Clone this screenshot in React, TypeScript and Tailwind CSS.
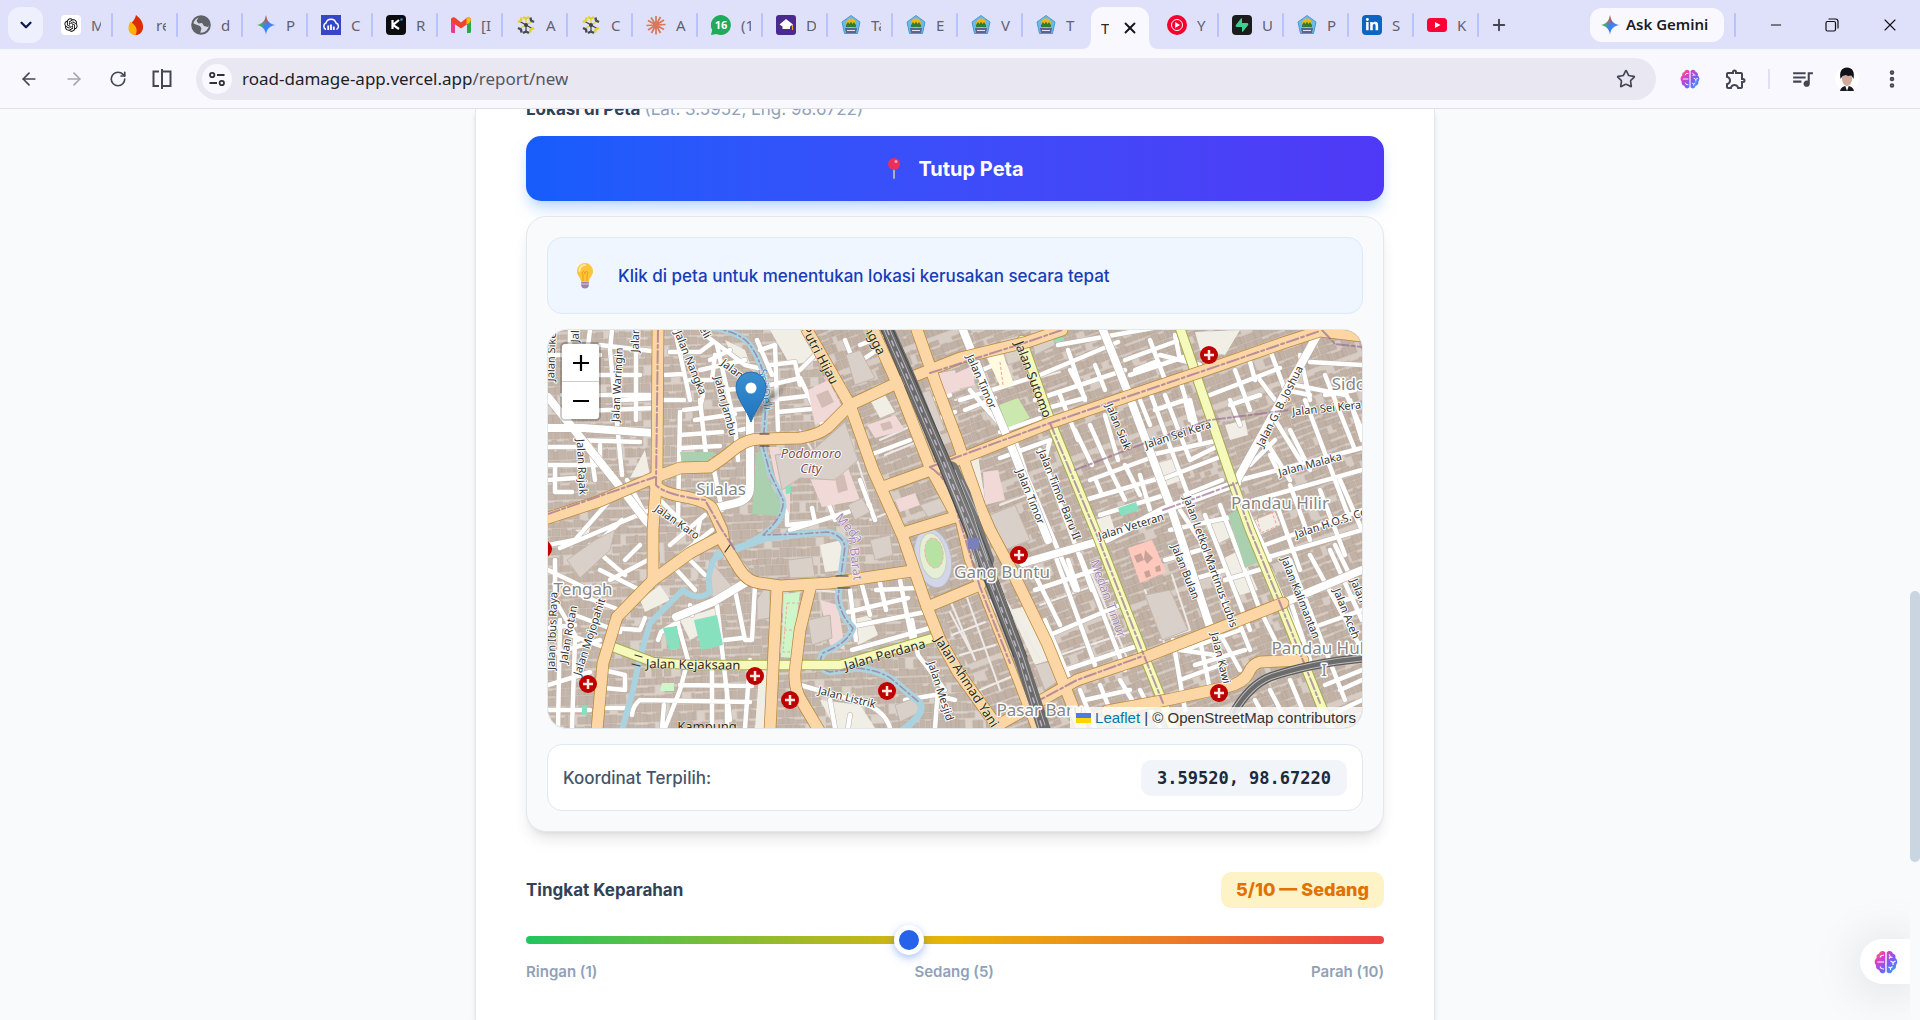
import { useState, type ReactNode } from 'react';
import { ArrowLeft, ArrowRight, ChevronDown, EllipsisVertical, Minus, Plus, RotateCw, Star, X } from 'lucide-react';
import { RiOpenaiFill, RiSupabaseFill } from 'react-icons/ri';
import { FaLinkedinIn } from 'react-icons/fa';
import { MdOutlineExtension, MdQueueMusic } from 'react-icons/md';

const GEMINI_PATH = 'M10 0C10.6 6 14 9.4 20 10C14 10.6 10.6 14 10 20C9.4 14 6 10.6 0 10C6 9.4 9.4 6 10 0Z';

function GeminiIcon() {
  return (
    <svg viewBox="0 0 20 20" className="size-5">
      <defs>
        <linearGradient id="gem" x1="0" y1="0.2" x2="1" y2="0.6">
          <stop offset="0" stopColor="#f9c21a" />
          <stop offset="0.3" stopColor="#3fae6a" />
          <stop offset="0.55" stopColor="#3b7ff5" />
          <stop offset="1" stopColor="#3b8bff" />
        </linearGradient>
        <linearGradient id="gemTop" x1="0" y1="0" x2="0" y2="1">
          <stop offset="0.1" stopColor="#f0453c" />
          <stop offset="0.5" stopColor="#f0453c" stopOpacity="0" />
        </linearGradient>
      </defs>
      <path d={GEMINI_PATH} fill="url(#gem)" />
      <path d={GEMINI_PATH} fill="url(#gemTop)" />
    </svg>
  );
}

function BrainIcon({ className }: { className: string }) {
  return (
    <svg viewBox="0 0 24 24" className={className}>
      <defs>
        <linearGradient id="brain" x1="0" y1="0" x2="1" y2="1">
          <stop offset="0" stopColor="#f9a01b" />
          <stop offset="0.25" stopColor="#e83bc0" />
          <stop offset="0.6" stopColor="#7a5cf5" />
          <stop offset="1" stopColor="#25b4f8" />
        </linearGradient>
      </defs>
      <path
        d="M11.3 2.5C9-.2 5.6 1 5.200 3.600C2.900 4 2 6.200 2.700 8C.3 9.500 0 13 2 15C1.400 17.600 3 19.800 5.300 20.200C6 23.600 9.500 24.200 11.300 22ZM12.700 2.500C15-.2 18.400 1 18.800 3.600C21.100 4 22 6.200 21.300 8C23.700 9.500 24 13 22 15C22.600 17.600 21 19.800 18.700 20.200C18 23.600 14.500 24.200 12.700 22Z"
        fill="url(#brain)"
      />
      <path
        d="M3.500 12H10M6 7.500Q6.500 5 10 5.200M6.200 16.500Q6.500 19 10 19M15 4.500L16.500 7L18.500 7.500M16.500 7L15 8.500M16.500 11L19 12.500L21.500 11M19 12.500V15M14.500 17L16.500 18L18.500 16.500M16.500 18V20"
        fill="none"
        stroke="#fff"
        strokeWidth="1.100"
      />
    </svg>
  );
}

function CrestIcon() {
  return (
    <svg viewBox="0 0 20 20" className="size-5">
      <path d="M10 0.500L19 7L16.500 18.500H3.500L1 7Z" fill="#6ab9e6" stroke="#4a9ccc" />
      <circle cx="10" cy="8.500" r="5" fill="#f6b40e" />
      <path d="M5 10L7 7L8.500 9L10 6.500L11.500 9L13 7L15 10V12H5Z" fill="#2f7d3b" />
      <path d="M4 13H16L15 18H5Z" fill="#5c6294" />
      <path d="M6 15.500H14" stroke="#e8e3f2" />
    </svg>
  );
}

function WheelIcon() {
  return (
    <svg viewBox="0 0 20 20" className="size-5" fill="none">
      <path d="M10 10V3M10 10L16 6.500M10 10L4 13.500" stroke="#e3d120" strokeWidth="1.200" />
      <path d="M10 10V17M10 10L16 13.500M10 10L4 6.500" stroke="#3f4046" strokeWidth="1.200" />
      <path d="M7 2L10 3.500L13 2M14 17.500L14.500 14.500L18 13M2 7L5 5.500L5.500 2.500" stroke="#e3d120" strokeWidth="2.400" />
      <path d="M14.500 2.500L15 5.500L18 7M7 18L10 16.500L13 18M2 13L5 14.500L5.500 17.500" stroke="#4b4c52" strokeWidth="2.400" />
      <circle cx="10" cy="10" r="2" fill="#3f4046" />
    </svg>
  );
}

function FireIcon() {
  return (
    <svg viewBox="0 0 20 20" className="size-5">
      <path d="M10 0C15 4 17.500 8 17 13C16.500 17.500 13 20 10 20C6 20 3 17 3 13C3 9 9 6 10 0Z" fill="#dd2c00" />
      <path d="M4 7C7 8 10 11 10.500 14C11 17 10 19 9.500 20C5 20 2.500 17 2.500 13C2.500 10 3.500 8.500 4 7Z" fill="#ffb300" />
    </svg>
  );
}

function GlobeIcon() {
  return (
    <svg viewBox="0 0 20 20" className="size-5">
      <circle cx="10" cy="10" r="8.800" fill="#d9dbe8" stroke="#5f6368" strokeWidth="2" />
      <path d="M1.500 8L5 9.500L9 11L10.500 13.500L9 18.500C4 18 1 14 1.500 8ZM8 1.500L13 1.500C16 3 18.500 6 18.500 9L17 12L13 11L11 8L7.500 8.500L5.500 6Z" fill="#5f6368" />
    </svg>
  );
}

function CloudIcon() {
  return (
    <svg viewBox="0 0 20 20" className="size-5">
      <path d="M0 0H20V20H0Z" fill="#3448c5" />
      <path d="M5 14.500A3.500 3.500 0 0 1 5 8A5.200 5.200 0 0 1 15 8A3.500 3.500 0 0 1 15.500 14.500" fill="none" stroke="#fff" strokeWidth="1.500" />
      <path d="M7.200 10.500V15M10 9.500V15M12.800 11.500V15" stroke="#fff" strokeWidth="1.800" />
    </svg>
  );
}

function KIcon() {
  return (
    <svg viewBox="0 0 20 20" className="size-5">
      <rect width="20" height="20" rx="4" fill="#0c0c0e" />
      <path d="M6.500 5V14M13 5L7 10L13 14" fill="none" stroke="#fff" strokeWidth="2.200" />
      <circle cx="15.500" cy="4.500" r="1.200" fill="#3b82f6" />
    </svg>
  );
}

function GmailIcon() {
  return (
    <svg viewBox="0 0 20 20" className="size-5">
      <path d="M0 4L4 6.500V18H1.500Q0 18 0 16.500Z" fill="#e93c8b" />
      <path d="M20 4L16 6.500V18H18.500Q20 18 20 16.500Z" fill="#2aa84c" />
      <path d="M0 5C0 2.500 2.500 1.500 4.500 3L10 7.500L15.500 3C17.500 1.500 20 2.500 20 5L18.500 7.500L10 13.500L1.500 7.500Z" fill="#f1412f" />
      <path d="M15.500 3C17.500 1.500 20 2.500 20 5L18.500 8L15.500 9.500Z" fill="#fbbc04" />
    </svg>
  );
}

function BurstIcon() {
  return (
    <svg viewBox="0 0 20 20" className="size-5">
      <path
        d="M10 10V1M10 10L14.500 2M10 10L18 5M10 10L19.500 9.500M10 10L18 14.500M10 10L14.500 18M10 10V19.500M10 10L5.500 18M10 10L2 15M10 10L.5 10.500M10 10L2 5.500M10 10L5 2.500"
        stroke="#d97757"
        strokeWidth="1.700"
      />
    </svg>
  );
}

function WhatsAppIcon() {
  return (
    <svg viewBox="0 0 20 20" className="size-5">
      <path d="M0 20L1.200 15A10 10 0 1 1 5.500 19Z" fill="#1faa5c" />
      <text x="10" y="14" textAnchor="middle" fontSize="11" fontWeight="700" fill="#fff" fontFamily="Noto Sans, sans-serif">
        16
      </text>
    </svg>
  );
}

function GradIcon() {
  return (
    <svg viewBox="0 0 20 20" className="size-5">
      <rect width="20" height="20" rx="3" fill="#4a2a8f" />
      <path d="M10 4L17 9.500L14 11.500V14H6.500V11.500L3.500 9.500Z" fill="#fff" />
      <path d="M16.500 10V15" stroke="#f59e0b" strokeWidth="1.200" />
    </svg>
  );
}

function YtMusicIcon() {
  return (
    <svg viewBox="0 0 20 20" className="size-5">
      <circle cx="10" cy="10" r="10" fill="#f8002f" />
      <circle cx="10" cy="10" r="5.500" fill="none" stroke="#fff" />
      <path d="M8.200 7L13 10L8.200 13Z" fill="#fff" />
    </svg>
  );
}

function YoutubeIcon() {
  return (
    <svg viewBox="0 0 20 20" className="size-5">
      <rect y="3" width="20" height="14" rx="3.500" fill="#ff0033" />
      <path d="M8 7L13.500 10L8 13Z" fill="#fff" />
    </svg>
  );
}

interface Tab {
  icon: ReactNode;
  title: string;
}

const leftTabs: Tab[] = [
  { icon: <span className="flex size-5 items-center justify-center rounded bg-white"><RiOpenaiFill size={16} className="text-black" /></span>, title: 'M' },
  { icon: <FireIcon />, title: 're' },
  { icon: <GlobeIcon />, title: 'd' },
  { icon: <GeminiIcon />, title: 'P' },
  { icon: <CloudIcon />, title: 'C' },
  { icon: <KIcon />, title: 'R' },
  { icon: <GmailIcon />, title: '[I' },
  { icon: <WheelIcon />, title: 'A' },
  { icon: <WheelIcon />, title: 'C' },
  { icon: <BurstIcon />, title: 'A' },
  { icon: <WhatsAppIcon />, title: '(1' },
  { icon: <GradIcon />, title: 'D' },
  { icon: <CrestIcon />, title: 'Ta' },
  { icon: <CrestIcon />, title: 'E' },
  { icon: <CrestIcon />, title: 'V' },
  { icon: <CrestIcon />, title: 'T' },
];

const rightTabs: Tab[] = [
  { icon: <YtMusicIcon />, title: 'Y' },
  { icon: <span className="flex size-5 items-center justify-center rounded-sm bg-[#1c1c1c]"><RiSupabaseFill size={14} className="text-[#3ecf8e]" /></span>, title: 'U' },
  { icon: <CrestIcon />, title: 'P' },
  { icon: <span className="flex size-5 items-center justify-center rounded-sm bg-[#0a66c2]"><FaLinkedinIn size={14} className="text-white" /></span>, title: 'S' },
  { icon: <YoutubeIcon />, title: 'K' },
];

function BrowserTab({ tab, divider }: { tab: Tab; divider: boolean }) {
  return (
    <button className="flex h-full w-[65px] shrink-0 items-center pl-3">
      {tab.icon}
      <span className="ml-2.5 w-2.5 overflow-hidden text-left text-[15px] leading-5 whitespace-nowrap text-[#5f6270]">
        {tab.title}
      </span>
      {divider && <span className="ml-2.5 h-6 w-0.5 rounded bg-[#b8c3fb]" />}
    </button>
  );
}

function BrowserChrome() {
  return (
    <header className="shrink-0 border-b border-[#dfe0ea] bg-[#f9f8fe] font-['Noto_Sans','Open_Sans',sans-serif]">
      <div className="flex h-[49px] items-center bg-[#dfe0fa]">
        <button aria-label="Search tabs" className="ml-2 flex h-9 w-[35px] shrink-0 items-center justify-center rounded-xl bg-[#eff0fe]">
          <ChevronDown size={18} strokeWidth={3} className="text-[#0b1a4f]" />
        </button>
        <div className="ml-1.5 flex h-full min-w-0 items-center">
          {leftTabs.map((tab, i) => (
            <BrowserTab key={i} tab={tab} divider={i < leftTabs.length - 1} />
          ))}
          <div className="flex h-full w-[66px] shrink-0 items-end pt-[7px]">
            <svg viewBox="0 0 10 10" className="-ml-2 size-2.5 shrink-0">
              <path d="M10 0V10H0Q10 10 10 0Z" fill="#f9f8fe" />
            </svg>
            <div className="flex h-full w-[58px] shrink-0 items-center justify-between rounded-t-xl bg-[#f9f8fe] pr-2.5 pl-2.5">
              <span className="w-2 overflow-hidden text-[15px] leading-5 text-[#2a2c36]">T</span>
              <X size={18} strokeWidth={2.500} className="text-[#15161c]" />
            </div>
            <svg viewBox="0 0 10 10" className="size-2.5 shrink-0">
              <path d="M0 0V10H10Q0 10 0 0Z" fill="#f9f8fe" />
            </svg>
          </div>
          {rightTabs.map((tab, i) => (
            <BrowserTab key={i} tab={tab} divider />
          ))}
          <button aria-label="New tab" className="ml-2.5">
            <Plus size={18} strokeWidth={2.500} className="text-[#444654]" />
          </button>
        </div>
        <button className="ml-auto flex h-[34px] w-[134px] shrink-0 items-center gap-1.5 rounded-xl bg-[#f9f8fe] pl-2.5 text-[15px] font-semibold whitespace-nowrap text-[#1b1c24]">
          <GeminiIcon />
          Ask Gemini
        </button>
        <span className="ml-2.5 h-6 w-0.5 shrink-0 rounded bg-[#b8c3fb]" />
        <div className="ml-8 flex shrink-0 items-center gap-[41px] pr-6 text-[#111]">
          <button aria-label="Minimize"><Minus size={16} strokeWidth={1.500} /></button>
          <button aria-label="Restore">
            <svg viewBox="0 0 14 14" className="size-3.5" fill="none" stroke="currentColor" strokeWidth="1.200">
              <rect x="1" y="3.500" width="9.500" height="9.500" rx="1.500" />
              <path d="M3.500 1H10.500Q13 1 13 3.500V10.500" />
            </svg>
          </button>
          <button aria-label="Close"><X size={20} strokeWidth={1.300} className="-mr-1" /></button>
        </div>
      </div>
      <div className="flex h-[59px] items-center">
        <div className="flex shrink-0 items-center gap-[25px] pl-[19px] text-[#444654]">
          <button aria-label="Back"><ArrowLeft size={20} strokeWidth={2} /></button>
          <button aria-label="Forward" className="text-[#a5a6b0]"><ArrowRight size={20} strokeWidth={2} /></button>
          <button aria-label="Reload"><RotateCw size={18} strokeWidth={2.200} /></button>
          <button aria-label="Split view">
            <svg viewBox="0 0 20 20" className="size-5" fill="none" stroke="currentColor" strokeWidth="2">
              <path d="M7 2.500H1.500V17H7M10 0V20M10 2.500H18.500V17H10" />
            </svg>
          </button>
        </div>
        <div className="ml-6 flex h-[42px] min-w-0 flex-1 items-center rounded-full bg-[#e9e8f2] pr-5 pl-1.5">
          <button aria-label="Site information" className="flex size-[30px] shrink-0 items-center justify-center rounded-full bg-[#f9f8fe]">
            <svg viewBox="0 0 16 16" className="size-4" fill="none" stroke="#2f303a" strokeWidth="1.800">
              <circle cx="3.200" cy="4" r="2.200" />
              <path d="M8 4H15.500M.5 12H8" />
              <circle cx="12.800" cy="12" r="2.200" />
            </svg>
          </button>
          <a href="https://road-damage-app.vercel.app/report/new" className="ml-2.5 truncate text-[17px] leading-6 text-[#1d1e26]">
            road-damage-app.vercel.app<span className="text-[#555764]">/report/new</span>
          </a>
          <button aria-label="Bookmark" className="ml-auto text-[#444654]"><Star size={20} strokeWidth={2} /></button>
        </div>
        <div className="flex shrink-0 items-center pr-[17px] pl-6 text-[#444654]">
          <BrainIcon className="size-5" />
          <button aria-label="Extensions" className="ml-6"><MdOutlineExtension size={24} /></button>
          <span className="ml-5 h-5 w-0.5 bg-[#dddffb]" />
          <button aria-label="Media" className="ml-5"><MdQueueMusic size={25} /></button>
          <svg viewBox="0 0 24 24" className="ml-5 size-6">
            <circle cx="12" cy="12" r="12" fill="#fff" />
            <path d="M5 24Q6 19 12 19Q18 19 19 24Z" fill="#191a20" />
            <path d="M10 18H14L12 24Z" fill="#fff" />
            <path d="M7 8H17V13Q16 18.500 12 19Q8 18.500 7 13Z" fill="#d2aa9c" />
            <path d="M5.500 12Q3.500 1 12 .5Q20.500 1 18.500 12L16.500 8.500L13 9L11 8L7.500 9Z" fill="#111217" />
          </svg>
          <button aria-label="Menu" className="ml-[22px]"><EllipsisVertical size={22} strokeWidth={3} /></button>
        </div>
      </div>
    </header>
  );
}

// ---- map ----

const highways = [
  'M658 330L657 470L653 530V580',
  'M548 518L600 501L653 478L680 468L710 467L723 458L737 447Q748 439 760 439L800 438Q818 435 827 428L850 405L897 383L960 358L1027 342L1062 330',
  'M807 330L850 405L873 470L903 537L927 607L940 640L958 672L1000 730',
  'M873 330L897 383L930 467L957 517',
  'M917 330L937 387L957 440L980 507L990 530L1013 573L1047 643L1073 707L1082 730',
  'M883 487L950 463L1050 423L1123 398L1203 371L1283 343L1320 331L1362 336',
  'M597 730L603 663L617 617L653 580L690 553L720 537L740 570Q748 582 760 583L780 586L830 583L912 571',
  'M655 485Q660 492 680 496Q705 500 712 508L722 530L724 542',
  'M777 588L770 730',
  'M811 585L800 630L795 672Q794 688 801 700L820 732',
  'M927 607L980 585',
  'M1000 724L1077 680L1143 658L1283 603',
  'M1107 711L1167 700L1227 687Q1243 683 1248 674Q1252 664 1260 662L1303 660',
  'M903 533L955 517',
];

const thinHighways = ['M957 512L968 560L980 587L1010 663L1035 728'];

const yellowRoads = [
  'M613 647L653 662L690 665L840 665L933 638',
  'M1022 340L1050 420L1097 535L1143 653L1163 703L1174 730',
  'M1180 328L1233 483L1250 530L1280 603L1320 703L1332 730',
];

const majorWhite = [
  'M548 397L617 483L647 522',
  'M548 428L583 428L653 433',
  'M750 407V487Q750 500 736 503L715 508',
  'M1103 330L1127 390L1170 505L1210 627',
  'M1320 330L1237 480',
  'M1023 563L1107 539L1163 510L1237 483',
  'M1283 603L1362 570',
  'M963 330L985 385L1010 443L1048 540',
  'M676 617L713 602L745 583',
];

const minorWhite = [
  // north-west block
  'M570 330V360M590 330L588 345M612 330L610 350L622 475M548 355H600M600 345L660 352M565 375H640M562 395H655M560 412L655 408M575 440L640 442M548 447H590M548 465H600V445M555 465V492H572M590 445L595 480M548 480L575 478M636 330V420M622 400L655 398',
  'M670 352H700L712 343M675 330L690 400M665 375L683 374M684 410L700 408L703 395M680 412L678 520M700 400L706 455M717 345L735 425L738 460M695 420L735 414M680 435L722 432M680 448L720 446M664 400H684M700 370L745 360M705 335L745 365L758 368M760 350L775 345L778 430M770 365L795 362L800 385M772 400L815 395M778 412L822 408M770 385L800 378L825 430M757 340L772 375M690 380H712L715 355M710 360L730 350M726 390L745 388M732 410L752 408M740 430L750 428M712 460L722 510M678 500L735 490M700 520L695 545',
  'M548 545L575 540L610 500M560 548L650 510M580 560L622 520M548 570L600 595M600 570L640 590M610 580L648 560M580 595L625 612M575 615L620 632M570 635L612 650M555 560V600L578 640M590 545L625 575M625 560L640 545M627 480L643 510L650 530M660 500L690 530M670 545L705 515M680 555L712 530M672 565L695 590M690 560L705 575',
  'M548 655L600 640M548 685L590 672M560 620L558 728M575 640L572 728M548 710H590M603 670L625 675V690L605 688M606 708H625M548 628L575 625M612 628L640 630L645 618',
  'M676 617L688 660M690 605L692 615M717 605L730 720M735 590L745 640L752 640L755 585M658 640L661 632L678 622M750 660L745 728M680 685L752 686M688 660L680 690L665 728M640 700L750 702M664 705L662 728M712 665V728M727 690V728M640 700Q633 705 632 715M725 640L742 638',
  // centre
  'M870 455L910 440M787 510V525L815 522L812 508M790 530L870 505M825 495L835 520M860 480L875 520M877 350L855 365L845 340M860 345L885 335M930 400L950 395M935 420L955 412M820 350L800 370',
  'M850 590L856 640M862 585L870 615M880 583L886 610M900 580L912 640M848 612L908 598M850 627L925 612M852 650L930 628M876 590L915 588M800 685L860 702Q885 710 890 728M850 715L848 728M912 620L918 655L945 690M938 690L935 728M905 700L935 695L955 700M830 700L835 728',
  // east of the railway
  'M960 400L1040 375L1118 342M1035 400L1125 370M1058 345L1170 325M1000 432L1040 418M1000 458L1050 440L1045 460M1015 440L1025 470M1020 460L1075 590M1040 450L1092 590M970 390L1005 430M965 410L995 398M965 378L1000 362',
  'M1075 430L1092 465M1090 425L1110 470M1105 415L1118 460M1060 395L1078 440M1140 400L1150 425M1150 392L1175 460M1165 395L1190 460L1220 445M1180 380L1195 430M1155 410L1185 400L1190 420M1090 480L1150 458M1085 500L1160 478M1100 515L1165 495M1095 478L1102 495L1120 490M1110 470L1125 500M1125 465L1140 495M1140 475L1150 510M1175 460L1190 500M1150 455L1220 440M1160 480L1225 455M1185 495L1222 480',
  'M1125 360L1185 338M1130 375L1190 355M1150 340L1165 380M1175 335L1180 360M1095 365L1105 390M1040 410L1085 398L1070 370M1068 350L1085 400M1190 400L1200 440M1160 355L1200 365M1135 370L1155 362',
  'M1210 395L1280 368M1230 400L1240 425M1270 350L1285 390L1310 395M1250 362L1255 380M1310 362L1362 365M1295 385L1345 395M1260 380L1275 400M1235 370L1250 410M1230 405L1260 395M1275 420L1300 460M1262 435L1290 480M1290 430L1310 470M1305 400L1350 520M1325 375L1355 450M1340 380L1362 430M1240 480L1362 448M1255 500L1362 470M1250 465L1275 440M1270 455L1280 475M1290 485L1310 540M1320 490L1345 555M1340 480L1362 530M1325 395L1355 390M1300 355L1310 400M1265 545L1362 510M1350 400L1362 440',
  'M1240 495L1270 560M1275 500L1300 570M1258 560L1362 530M1170 530L1240 515M1180 510L1200 540L1230 620M1205 515L1250 630M1220 505L1260 610L1275 640M1225 580L1265 568M1165 560L1200 550M1190 580L1225 570M1215 625L1240 670M1240 625L1250 650M1185 650L1240 630M1195 665L1245 650M1173 640L1185 710M1180 680L1220 665M1200 640L1210 690M1180 650L1215 655',
  'M1015 570L1035 615M1035 575L1060 625M1055 555L1095 665M1080 555L1125 670M1035 590L1095 570M1050 635L1120 605M1065 670L1140 645M1045 620L1070 680M1080 690L1095 728M1100 685L1110 710M1120 680L1135 705M1140 690L1160 728M1085 700L1130 690M1068 560L1078 590',
  'M1270 570L1300 640M1290 560L1345 700M1310 555L1362 650M1330 550L1362 620M1345 600L1362 595M1320 625L1362 610M1290 600L1310 660M1335 545L1362 600M1270 690L1290 728M1255 700L1270 728M1235 705L1245 728M1290 680L1310 728M1340 690L1362 680M1325 685L1362 670M1330 715L1362 700',
];

const footways =
  'M950 600L975 660M965 592L1000 690M952 635L985 622M960 655L995 645M980 690L1015 675M950 612L970 650M1000 640L1035 728M990 600L1010 640M1000 590L1040 660M1040 605L1110 580M1060 655L1135 630M1090 570L1130 665M955 400L1060 372M965 470L990 540M1145 590L1165 645M1160 640L1190 630L1172 575M850 437L868 495M800 430L812 450M845 385L850 400M820 450L830 437M880 440L925 420M885 455L922 440M1000 505L1040 490M835 475L845 500M870 520L890 512M770 625L830 620M815 590L835 592';

const greyPlots =
  'M813 450L845 422L858 460L835 480L800 478L782 490L775 455ZM900 400L930 390L945 430L920 440ZM567 560L595 540L615 530L610 550L580 578ZM710 560L735 590L715 598L706 590ZM788 560L812 557L815 577L790 578ZM763 590L770 590V618L757 620V600ZM808 620L830 615L832 638L812 645ZM895 705L915 698L920 712L900 722ZM846 355L860 350L875 378L855 385ZM1145 595L1170 590L1188 630L1162 640ZM990 515L1015 505L1030 540L1005 550ZM1030 330L1052 330L1055 345L1035 355ZM1035 665L1055 660L1060 680L1045 690ZM1000 340L1020 335L1022 360L1008 365ZM920 505L940 498L948 510L928 517ZM740 558L750 570L735 572ZM870 540L890 535L893 555L875 560ZM650 445H662V460H650ZM848 505L862 498L870 512L855 520Z';

const pinkPlots =
  'M808 390L828 380L845 412L815 425ZM867 425L895 415L905 430L875 438ZM810 478L845 460L860 500L822 507ZM983 472L998 470L1005 500L985 505ZM930 375L955 370L960 390L935 398ZM952 375L972 366L975 385L955 390ZM895 500L915 493L920 505L900 512ZM769 447L779 447L790 490L790 515L779 495ZM820 600L838 605L845 650L830 645Z';

const creamPlots =
  'M640 600L660 585L670 600L645 612ZM725 340L745 350L752 370L735 362ZM770 330H805L820 360L790 365ZM575 530L590 528L588 538ZM1255 520L1275 512L1280 525L1260 535ZM1195 332L1240 330L1225 355L1200 350ZM1153 465L1175 458L1182 480L1160 488ZM820 545L842 540L845 570L825 572ZM1220 560L1240 550L1258 590L1240 595ZM850 620L870 615L878 635L858 645ZM820 700L860 705L875 728H835ZM680 620L715 608L718 625L690 640ZM1225 425L1245 420L1248 435L1230 440ZM1095 520L1110 515L1115 530L1100 532ZM1205 525L1225 515L1235 535L1215 545ZM1010 610L1030 605L1050 660L1035 665ZM870 400L885 395L895 412L880 418ZM760 660L770 670V728H755ZM965 460L978 455L985 500L975 505ZM645 450L650 475L630 478Z';

interface MapLabel {
  x: number;
  y: number;
  r: number;
  t: string;
  kind: 'street' | 'main' | 'place' | 'purple' | 'water' | 'mall';
}

const labels: MapLabel[] = [
  { x: 555, y: 357, r: -88, t: 'Jalan Sike', kind: 'street' },
  { x: 579, y: 330, r: -88, t: 'Jalan', kind: 'street' },
  { x: 639, y: 340, r: -88, t: 'Jalan', kind: 'street' },
  { x: 621, y: 385, r: -87, t: 'Jalan Waringin', kind: 'street' },
  { x: 687, y: 364, r: 68, t: 'Jalan Nangka', kind: 'street' },
  { x: 730, y: 372, r: 38, t: 'Jalan', kind: 'street' },
  { x: 702, y: 334, r: 60, t: 'eli', kind: 'street' },
  { x: 722, y: 407, r: 75, t: 'Jalan Jambu', kind: 'street' },
  { x: 761, y: 390, r: 82, t: 'Sei Deli', kind: 'water' },
  { x: 816, y: 357, r: 62, t: 'Putri Hijau', kind: 'main' },
  { x: 869, y: 339, r: 62, t: 'angga', kind: 'main' },
  { x: 811, y: 458, r: 0, t: 'Podomoro', kind: 'mall' },
  { x: 811, y: 473, r: 0, t: 'City', kind: 'mall' },
  { x: 721, y: 495, r: 0, t: 'Silalas', kind: 'place' },
  { x: 578, y: 467, r: 87, t: 'Jalan Rajak', kind: 'street' },
  { x: 675, y: 525, r: 35, t: 'Jalan Karo', kind: 'street' },
  { x: 846, y: 531, r: 48, t: 'Meda', kind: 'purple' },
  { x: 851, y: 559, r: 83, t: 'n Barat', kind: 'purple' },
  { x: 583, y: 595, r: 0, t: 'Tengah', kind: 'place' },
  { x: 556, y: 631, r: -88, t: 'Jalan Ibus Raya', kind: 'street' },
  { x: 572, y: 635, r: -80, t: 'Jalan Rotan', kind: 'street' },
  { x: 593, y: 638, r: -72, t: 'Jalan Mojopahit', kind: 'street' },
  { x: 693, y: 669, r: 1, t: 'Jalan Kejaksaan', kind: 'main' },
  { x: 886, y: 659, r: -16, t: 'Jalan Perdana', kind: 'main' },
  { x: 846, y: 701, r: 14, t: 'Jalan Listrik', kind: 'street' },
  { x: 937, y: 692, r: 72, t: 'Jalan Mesjid', kind: 'street' },
  { x: 707, y: 731, r: 0, t: 'Kampung', kind: 'main' },
  { x: 963, y: 684, r: 57, t: 'Jalan Ahmad Yani', kind: 'main' },
  { x: 1002, y: 578, r: 0, t: 'Gang Buntu', kind: 'place' },
  { x: 1040, y: 716, r: 0, t: 'Pasar Baru', kind: 'place' },
  { x: 1104, y: 600, r: 70, t: 'Medan Timur', kind: 'purple' },
  { x: 978, y: 383, r: 66, t: 'Jalan Timor', kind: 'street' },
  { x: 1029, y: 381, r: 69, t: 'Jalan Sutomo', kind: 'main' },
  { x: 1115, y: 428, r: 67, t: 'Jalan Siak', kind: 'street' },
  { x: 1179, y: 438, r: -18, t: 'Jalan Sei Kera', kind: 'street' },
  { x: 1327, y: 412, r: -6, t: 'Jalan Sei Kera', kind: 'street' },
  { x: 1283, y: 408, r: -63, t: 'Jalan G. B. Joshua', kind: 'street' },
  { x: 1353, y: 390, r: 0, t: 'Sidoc', kind: 'place' },
  { x: 1311, y: 468, r: -15, t: 'Jalan Malaka', kind: 'street' },
  { x: 1027, y: 498, r: 68, t: 'Jalan Timor', kind: 'street' },
  { x: 1056, y: 496, r: 68, t: 'Jalan Timor Baru II', kind: 'street' },
  { x: 1132, y: 530, r: -17, t: 'Jalan Veteran', kind: 'street' },
  { x: 1280, y: 509, r: 0, t: 'Pandau Hilir', kind: 'place' },
  { x: 1340, y: 524, r: -18, t: 'Jalan H.O.S. Cokro', kind: 'street' },
  { x: 1207, y: 563, r: 70, t: 'Jalan Letkol Martinus Lubis', kind: 'street' },
  { x: 1182, y: 573, r: 68, t: 'Jalan Bulan', kind: 'street' },
  { x: 1297, y: 599, r: 68, t: 'Jalan Kalimantan', kind: 'street' },
  { x: 1343, y: 615, r: 68, t: 'Jalan Aceh', kind: 'street' },
  { x: 1355, y: 592, r: 68, t: 'Jalan', kind: 'street' },
  { x: 1217, y: 659, r: 76, t: 'Jalan Kawi', kind: 'street' },
  { x: 1323, y: 654, r: 0, t: 'Pandau Hulu', kind: 'place' },
  { x: 1324, y: 676, r: 0, t: 'I', kind: 'place' },
];

const labelStyles: Record<MapLabel['kind'], string> = {
  street: 'fill-[#333] stroke-white stroke-2 text-[11px]',
  main: 'fill-[#2b2b1d] stroke-[#fdf3d8] stroke-1 text-[13px]',
  place: 'fill-[#858585] stroke-white stroke-3 text-[17px]',
  purple: 'fill-[#a389b4] stroke-white stroke-1 text-[13px]',
  water: 'fill-[#4a86b8] stroke-white stroke-1 text-[12px]',
  mall: 'fill-[#7d4f50] stroke-white stroke-2 text-[13px] italic',
};

const clinics = [
  [1209, 355], [1019, 555], [588, 684], [755, 676], [790, 700], [887, 691], [1219, 693], [543, 549],
];

const TILE = 160;

// rows of small houses with uneven plots, deterministic for a given seed
function housePath(seed: number) {
  let s = seed;
  const rand = () => {
    s = (s * 16807) % 2147483647;
    return s / 2147483647;
  };
  let d = '';
  for (let y = 0; y < TILE - 4; ) {
    const h = 5 + Math.floor(rand() * 6);
    for (let x = 0; x < TILE - 3; ) {
      const w = 3 + Math.floor(rand() * 7);
      const inset = Math.floor(rand() * 3);
      if (rand() > 0.08) d += `M${x} ${y + inset}h${w}v${h - inset}h${-w}Z`;
      x += w + (rand() > 0.55 ? 1 : 0);
    }
    y += h + 1;
  }
  return d;
}

const houses = housePath(4217);
const moreHouses = housePath(918);

function MapCanvas() {
  const boundary = 'stroke-[#9a7096] opacity-70';
  return (
    <svg viewBox="548 330 814 398" preserveAspectRatio="xMidYMid slice" className="block h-full w-full" role="img" aria-label="Peta Medan">
      <defs>
        <pattern id="blocks" width={TILE} height={TILE} patternUnits="userSpaceOnUse" patternTransform="rotate(-2)">
          <path d="M0 0H160V160H0Z" fill="#dbd2ca" />
          <path d={houses} fill="#c4b5aa" stroke="#b8a89c" strokeWidth="0.500" />
        </pattern>
        <pattern id="blocksTilted" width={TILE} height={TILE} patternUnits="userSpaceOnUse" patternTransform="rotate(-20)">
          <path d="M0 0H160V160H0Z" fill="#d8cec5" />
          <path d={moreHouses} fill="#c2b2a6" stroke="#b5a598" strokeWidth="0.500" />
        </pattern>
      </defs>
      <path d="M548 330H1362V728H548Z" fill="url(#blocks)" />
      <path d="M800 330H1362V728H1000L900 530Z" fill="url(#blocksTilted)" />
      <path d={creamPlots} fill="#f1eee6" />

      <g fill="none" strokeLinecap="round" strokeLinejoin="round">
        <path d={footways} stroke="#eeeae8" strokeWidth="2" />
        <g stroke="#bdb2aa" strokeWidth="5.500">
          {minorWhite.map((d) => <path key={d} d={d} />)}
        </g>
        <g stroke="#fff" strokeWidth="4.500">
          {minorWhite.map((d) => <path key={d} d={d} />)}
        </g>
      </g>

      <path d={pinkPlots} fill="#f1d9d8" />
      <path d={greyPlots} fill="#d9d0c9" stroke="#c4b7ad" />
      <path d="M835 478L844 474L848 490L838 493ZM816 395L828 390L834 402L822 408ZM880 424L890 421L893 428L883 431Z" fill="#d3bdb5" />
      <path d="M1128 548L1152 540L1166 572L1140 583Z" fill="#ffc9be" />
      <path d="M1134 556L1141 553L1144 560L1137 563ZM1145 550L1153 558L1147 564L1144 559ZM1144 572L1149 570L1151 576L1146 578ZM1155 567L1160 565L1161 571L1156 572Z" fill="#c9a196" />
      <path d="M986 356L1003 354L1014 384L1001 388Z" fill="#fffbe0" />
      <path d="M1000 362L1003 385" stroke="#f59a94" strokeDasharray="3 2" />
      <path d="M999 405L1018 398L1030 418L1007 428Z" fill="#cbe8b0" />
      <path d="M680 452H716L708 462L682 463ZM756 453L762 450L768 478L785 512L778 516L752 514Z" fill="#abd0b0" />
      <path d="M1228 515L1237 510L1258 562L1245 568Z" fill="#abd0b0" />
      <path d="M694 620L717 615L723 645L701 650ZM663 628L677 626L680 648L669 650ZM1118 508L1136 502L1139 510L1121 516ZM1052 335L1062 332L1064 340L1054 342ZM785 487L791 485L791 493L786 494ZM582 706H587V715H582Z" fill="#88e0be" />
      <path d="M784 594L800 592L792 658L781 657Z" fill="#cdf7c9" />
      <path d="M787 603H799L794 652H783ZM784 630H796" fill="none" stroke="#f3a7a0" strokeDasharray="3 2" />
      <path d="M662 683H674V691H660Z" fill="#cdf7c9" />
      <path d="M1257 518L1272 512L1277 526L1261 533ZM1295 350L1305 340" fill="none" stroke="#f59a94" strokeDasharray="3 2" />

      <g fill="none" strokeLinecap="round" strokeLinejoin="round">
        <g stroke="#aad3df">
          <path d="M713 328Q740 332 750 345Q762 362 767 387L763 447L770 473L783 500Q785 515 775 525L763 535L740 548L717 557" strokeWidth="6" />
          <path d="M717 555L767 538L800 534L827 532Q843 535 845 547L838 597Q840 615 853 628Q848 643 823 653Q815 668 830 672L857 668Q880 670 893 680L920 703Q926 713 903 730" strokeWidth="7" />
          <path d="M717 555Q706 570 710 592Q698 602 683 590L650 623L640 657L633 690L622 730" strokeWidth="6" />
        </g>
        <g className={boundary} strokeWidth="1.500" strokeDasharray="8 3 2 3">
          <path d="M713 328Q740 332 750 345Q762 362 767 387L763 447L770 473L783 500Q785 515 763 535L800 534L827 532Q843 535 845 547L838 597Q840 615 853 628Q848 643 823 653Q815 668 830 672L857 668Q880 670 893 680L920 703" />
        </g>

        <g stroke="#b9aea6" strokeWidth="9">
          {majorWhite.map((d) => <path key={d} d={d} />)}
        </g>
        <g stroke="#fff" strokeWidth="8">
          {majorWhite.map((d) => <path key={d} d={d} />)}
        </g>

        {/* stadium near the station */}
        <ellipse cx="933" cy="558" rx="18" ry="30" transform="rotate(-12 933 558)" fill="#d3d6e6" stroke="#b8bccf" />
        <ellipse cx="933" cy="556" rx="13" ry="23" transform="rotate(-10 933 556)" fill="#e4efd6" stroke="#c9cfc2" />
        <ellipse cx="934" cy="553" rx="9" ry="15" transform="rotate(-8 934 553)" fill="#b6e3a3" stroke="#f3b0a6" strokeDasharray="3 2" />

        <g stroke="#a9aa55" strokeWidth="10.500">
          {yellowRoads.map((d) => <path key={d} d={d} />)}
        </g>
        <g stroke="#f6fabb" strokeWidth="8.500">
          {yellowRoads.map((d) => <path key={d} d={d} />)}
        </g>
        <g stroke="#b98a3c">
          {highways.map((d) => <path key={d} d={d} strokeWidth="12.500" />)}
          {thinHighways.map((d) => <path key={d} d={d} strokeWidth="8" />)}
        </g>
        <g stroke="#fcd6a4">
          {highways.map((d) => <path key={d} d={d} strokeWidth="11" />)}
          {thinHighways.map((d) => <path key={d} d={d} strokeWidth="6.500" />)}
        </g>

        <g className={boundary} strokeWidth="2" strokeDasharray="12 3 3 3">
          <path d="M658 330L656 485Q665 495 705 500L722 530L735 550" />
          <path d="M548 514L655 477" />
          <path d="M930 373L1027 342L1062 330" />
          <path d="M930 467L1050 423L1203 371L1320 331" />
          <path d="M930 467Q950 480 957 512L980 587L1010 663" />
          <path d="M1050 423L1097 535L1143 653L1163 703" />
          <path d="M1233 483L1250 530L1280 603L1320 703" />
          <path d="M1010 716L1077 680L1143 656" />
          <path d="M1075 470L1145 443L1210 420L1290 410M1163 510L1237 483M1322 330L1335 344L1362 347" />
        </g>

        {/* railway */}
        <g>
          <path d="M887 328L910 380L940 453L963 510L977 545L1002 610L1020 657L1040 717L1045 732" stroke="#6b6b6b" strokeWidth="13" />
          <path d="M950 470L962 495L972 525L985 560" stroke="#767676" strokeWidth="18" />
          <path d="M884 330L938 455L975 545L1018 657L1040 732M890 330L944 455L981 545L1023 657L1045 725" stroke="#c9c9c9" strokeWidth="0.800" />
          <path d="M887 330L940 453L977 545L1020 657L1043 730" stroke="#c4b3cf" strokeWidth="1.500" strokeDasharray="5 7" />
          <path d="M881 330L934 455L972 547L1014 657M893 330L948 455L985 545L1027 657" stroke="#3f3f3f" strokeWidth="0.800" />
          <path d="M945 472L962 515L978 565M955 470L973 515L988 560M962 480L978 515" stroke="#ccc" strokeWidth="0.800" />
          <path d="M1234 712Q1250 685 1270 677Q1310 663 1364 658" stroke="#5b5b5b" strokeWidth="9" />
          <path d="M1234 712Q1250 685 1270 677Q1310 663 1364 658" stroke="#bdbdbd" strokeWidth="6.500" />
          <path d="M1234 712Q1250 685 1270 677Q1310 663 1364 658" stroke="#6b6b6b" strokeWidth="4.500" />
        </g>
        <path d="M760 434H769M760 446H769M836 576H848M838 588H850M725 552L730 545M635 655L642 657M632 664L640 666" stroke="#333" strokeWidth="1.200" />
      </g>
      <rect x="968" y="538" width="11" height="11" fill="#7a80b8" />

      <g textAnchor="middle" className="font-['Noto_Sans',sans-serif] [paint-order:stroke] [stroke-linejoin:round]">
        {labels.map((l, i) => (
          <text key={i} transform={`translate(${l.x} ${l.y}) rotate(${l.r})`} className={labelStyles[l.kind]}>
            {l.t}
          </text>
        ))}
      </g>
      {clinics.map(([x, y]) => (
        <g key={`${x}-${y}`}>
          <circle cx={x} cy={y} r="9" fill="#bf0000" />
          <path d={`M${x - 5} ${y}H${x + 5}M${x} ${y - 5}V${y + 5}`} stroke="#fbe9e3" strokeWidth="2.500" />
        </g>
      ))}

      {/* selected location */}
      <defs>
        <linearGradient id="pinFill" x1="0" y1="0" x2="0" y2="1">
          <stop offset="0" stopColor="#3a8fd0" />
          <stop offset="1" stopColor="#1f74bf" />
        </linearGradient>
        <radialGradient id="pinShade">
          <stop offset="0" stopColor="#000" stopOpacity="0.350" />
          <stop offset="1" stopColor="#000" stopOpacity="0" />
        </radialGradient>
      </defs>
      <ellipse cx="768" cy="402" rx="28" ry="6" transform="rotate(-45 768 402)" fill="url(#pinShade)" />
      <path d="M751 422C746 408 736 399 736 387A15 15 0 0 1 766 387C766 399 756 408 751 422Z" fill="url(#pinFill)" stroke="#2a6ea6" />
      <circle cx="751" cy="388" r="5.500" fill="#fff" />
    </svg>
  );
}

function MapView() {
  return (
    <div className="relative h-[400px] overflow-hidden rounded-[20px] border border-slate-200">
      <MapCanvas />
      <div className="absolute top-3 left-3 overflow-hidden rounded-[5px] border-2 border-black/20 bg-white bg-clip-padding text-black">
        <button aria-label="Zoom in" className="flex h-[38px] w-[37px] items-center justify-center border-b border-[#ccc]">
          <svg viewBox="0 0 16 16" className="size-4"><path d="M0 8H16M8 0V16" stroke="currentColor" strokeWidth="2.200" /></svg>
        </button>
        <button aria-label="Zoom out" className="flex h-[37px] w-[37px] items-center justify-center">
          <svg viewBox="0 0 16 16" className="size-4"><path d="M0 8H16" stroke="currentColor" strokeWidth="2.200" /></svg>
        </button>
      </div>
      <div className="absolute right-0 bottom-0 flex items-center bg-white/80 px-1.5 font-['Liberation_Sans',Arial,sans-serif] text-[15px] leading-[21px] whitespace-pre text-[#333]">
        <svg viewBox="0 0 15 10" className="mr-1 h-2.5 w-[15px]">
          <path d="M0 0H15V5H0Z" fill="#4c7be1" />
          <path d="M0 5H15V10H0Z" fill="#ffd500" />
        </svg>
        <a href="https://leafletjs.com" className="text-[#0078a8]">Leaflet</a>
        {' | © OpenStreetMap contributors'}
      </div>
    </div>
  );
}

function PushpinIcon() {
  return (
    <svg viewBox="0 0 16 22" className="h-[22px] w-4">
      <path d="M7 10H9V20L8 21.500L7 20Z" fill="#a9b0c4" />
      <circle cx="8" cy="6" r="6" fill="#e8305f" />
      <circle cx="10" cy="3.500" r="1.600" fill="#ff9db4" />
    </svg>
  );
}

function BulbIcon() {
  return (
    <svg viewBox="0 0 18 26" className="h-[26px] w-[18px]">
      <path d="M9 0A8 8 0 0 1 17 8.300C17 12.500 13.500 14 12.800 19H5.200C4.500 14 1 12.500 1 8.300A8 8 0 0 1 9 0Z" fill="#fcc53a" />
      <path d="M3.500 8A5.500 5.500 0 0 1 9 2" fill="none" stroke="#ffe9a3" strokeWidth="2" strokeLinecap="round" />
      <path d="M7 18V12Q5 9 7.500 8.500Q9 8.500 9 11Q9 8.500 10.500 8.500Q13 9 11 12V18" fill="none" stroke="#f29a1f" />
      <path d="M5.200 19H12.800V23Q12 25.500 9 25.500Q6 25.500 5.200 23Z" fill="#9b86a8" />
      <path d="M5.200 21H12.800" stroke="#d5c8dc" />
    </svg>
  );
}

function severityLabel(value: number) {
  if (value < 4) return 'Ringan';
  return value < 8 ? 'Sedang' : 'Parah';
}

export default function App() {
  const [showMap, setShowMap] = useState(true);
  const [severity, setSeverity] = useState(5);

  return (
    <div className="flex h-screen flex-col overflow-hidden bg-[#f8fafc]">
      <BrowserChrome />
      <main className="relative flex min-h-0 flex-1 justify-center overflow-hidden pr-2.5 font-[Inter,sans-serif] text-[17px] leading-6">
        <div className="w-full max-w-[960px] border-x border-slate-200 bg-white px-[50px] shadow-md">
          <div className="-mt-3">
            <div className="font-bold text-slate-700">
              Lokasi di Peta <span className="font-normal text-slate-400">(Lat: 3.5952, Lng: 98.6722)</span>
            </div>
            <button
              onClick={() => setShowMap(!showMap)}
              className="mt-[15px] flex h-[65px] w-full items-center justify-center gap-4 rounded-[15px] bg-linear-to-r from-[#155dfc] to-[#4f39f6] text-xl font-bold text-white shadow-lg shadow-blue-200"
            >
              <PushpinIcon />
              {showMap ? 'Tutup Peta' : 'Buka Peta'}
            </button>
          </div>

          {showMap && (
            <section className="mt-[15px] flex flex-col gap-[15px] rounded-[20px] border border-slate-200 bg-slate-50 p-5 shadow-lg">
              <div className="flex h-[77px] items-center gap-6 rounded-[15px] border border-blue-100 bg-[#eff6ff] px-7 font-medium text-[#193cb8]">
                <BulbIcon />
                Klik di peta untuk menentukan lokasi kerusakan secara tepat
              </div>
              <MapView />
              <div className="flex h-[67px] items-center justify-between rounded-[15px] border border-slate-200 bg-white px-[15px]">
                <span className="font-medium text-slate-600">Koordinat Terpilih:</span>
                <span className="rounded-[10px] bg-slate-100 px-4 py-1.5 font-['DejaVu_Sans_Mono',monospace] font-bold text-slate-800">
                  3.59520, 98.67220
                </span>
              </div>
            </section>
          )}

          <section className="mt-10">
            <div className="flex items-center justify-between">
              <label htmlFor="severity" className="font-bold text-slate-700">Tingkat Keparahan</label>
              <span className="rounded-[10px] bg-amber-100 px-[15px] py-1.5 text-lg leading-6 font-extrabold text-[#e17100]">
                {severity}/10 — {severityLabel(severity)}
              </span>
            </div>
            <input
              id="severity"
              type="range"
              min={1}
              max={10}
              value={severity}
              onChange={(e) => setSeverity(Number(e.target.value))}
              className="mt-7 block h-2 w-full cursor-pointer appearance-none rounded-full bg-[linear-gradient(to_right,#22c55e,#eab308,#ef4444)] [&::-webkit-slider-thumb]:size-[30px] [&::-webkit-slider-thumb]:appearance-none [&::-webkit-slider-thumb]:rounded-full [&::-webkit-slider-thumb]:border-5 [&::-webkit-slider-thumb]:border-white [&::-webkit-slider-thumb]:bg-[#2563eb] [&::-webkit-slider-thumb]:shadow-[0_3px_8px_rgba(37,99,235,0.4)]"
            />
            <div className="mt-[18px] flex justify-between text-[15px] leading-5 font-semibold text-slate-400">
              <span>Ringan (1)</span>
              <span>Sedang (5)</span>
              <span>Parah (10)</span>
            </div>
          </section>
        </div>

        {/* assistant launcher */}
        <button
          aria-label="Assistant"
          className="absolute right-2.5 bottom-9 flex h-[45px] w-[50px] items-center rounded-l-full bg-white pl-3.5 shadow-[0_4px_50px_rgba(0,0,0,0.15)]"
        >
          <BrainIcon className="size-6" />
        </button>
        <div className="absolute top-0 right-0 h-full w-2.5 bg-[#f8fafc] pt-[482px]">
          <div className="h-[271px] rounded-full bg-slate-300" />
        </div>
      </main>
    </div>
  );
}
